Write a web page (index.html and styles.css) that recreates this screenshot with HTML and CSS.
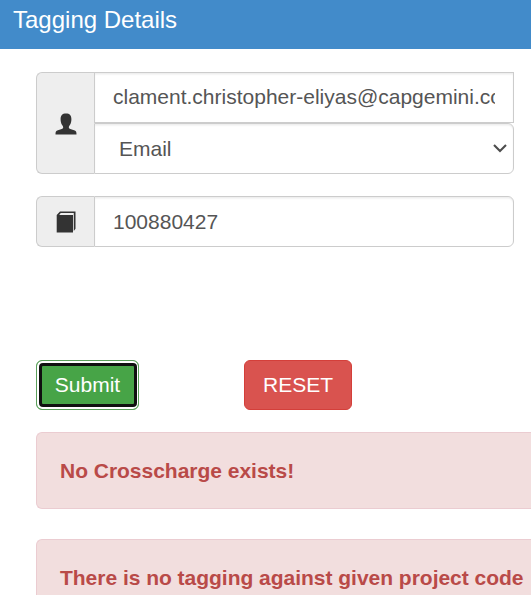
FILE: index.html
```html
<!DOCTYPE html>
<html lang="en">
<head>
<meta charset="utf-8">
<title>Tagging Details</title>
<link rel="stylesheet" href="styles.css">
</head>
<body>
<header class="panel-heading"><h1>Tagging Details</h1></header>
<main class="panel-body">
  <div class="input-group">
    <span class="addon">
      <svg class="icon-user" width="22" height="22" viewBox="0 0 22 22" fill="#333"><path d="M11 .5C7.200.5 5.600 2.500 5.600 6c0 2.200.4 4.600 1.700 6.300.5.7.9 1.200.9 1.900 0 .9-.5 1.300-1.500 1.700l-4.500 1.700C.9 18.200.5 19 .5 21.500h21c0-2.500-.4-3.300-1.700-3.900l-4.500-1.700c-1-.4-1.500-.8-1.500-1.700 0-.7.4-1.200.9-1.900 1.300-1.700 1.700-4.100 1.700-6.300C16.400 2.500 14.800.5 11 .5z"/></svg>
    </span>
    <div class="fields">
      <input class="control control-email" type="text" value="clament.christopher-eliyas@capgemini.com">
      <div class="control control-select">
        <span>Email</span>
        <svg width="14" height="9" viewBox="0 0 14 9" fill="none" stroke="#4d4d4d" stroke-width="2.100"><path d="M1 1l6 6 6-6"/></svg>
      </div>
    </div>
  </div>
  <div class="input-group">
    <span class="addon">
      <svg class="icon-book" width="20" height="22" viewBox="0 0 20 22" fill="#333"><path d="M.7 4L4 .5h15.500v17.300L17.800 20V2H4.700L3.200 4H17v17.500H.7z"/></svg>
    </span>
    <div class="fields">
      <input class="control control-code" type="text" value="100880427">
    </div>
  </div>
  <div class="actions">
    <button class="btn btn-submit" type="button">Submit</button>
    <button class="btn btn-reset" type="button">RESET</button>
  </div>
  <div class="alert">No Crosscharge exists!</div>
  <div class="alert alert-last">There is no tagging against given project code</div>
</main>
</body>
</html>
```
FILE: styles.css
```css
* { box-sizing: border-box; }
body {
  margin: 0;
  height: 595px;
  overflow: hidden;
  background: #fff;
  color: #555;
  font: 21px/30px "Liberation Sans", Arial, sans-serif;
}
.panel-heading {
  height: 49px;
  padding: 6px 13px;
  background: #428bca;
  color: #fff;
}
.panel-heading h1 {
  margin: 0;
  font-size: 24px;
  font-weight: 400;
  line-height: 28px;
}
.panel-body { padding: 23px 0 0 36px; }
.input-group {
  display: flex;
  width: 478px;
  margin-bottom: 22px;
}
.addon {
  display: flex;
  align-items: center;
  justify-content: center;
  width: 58px;
  border: 1px solid #ccc;
  border-right: 0;
  border-radius: 6px 0 0 6px;
  background: #eee;
}
.addon svg { display: block; }
.icon-user { margin-top: 1px; }
.icon-book { margin-top: 1px; }
.fields { flex: 1; min-width: 0; }
.control {
  display: block;
  width: 100%;
  height: 51px;
  margin: 0;
  padding: 0 18px;
  border: 1px solid #ccc;
  background: #fff;
  box-shadow: inset 0 1.5px 1.5px rgba(0, 0, 0, .075);
  color: #555;
  font: inherit;
  outline: 0;
}
.control-email { padding-bottom: 1px; }
.control-select {
  display: flex;
  align-items: center;
  justify-content: space-between;
  height: 51px;
  padding: 0 6px 0 24px;
  border-radius: 0 6px 6px 0;
}
.control-code { border-radius: 0 6px 6px 0; }
.actions {
  display: flex;
  gap: 105px;
  margin: 113px 0 22px;
}
.btn {
  height: 50px;
  padding: 0;
  border: 1px solid;
  border-radius: 6px;
  color: #fff;
  font: inherit;
}
.btn-submit {
  position: relative;
  width: 103px;
  border-color: #5b9f5b;
  background: #47a447;
  box-shadow: inset 0 0 0 3px #fff;
}
.btn-submit::after {
  content: "";
  position: absolute;
  inset: 2px 1px 2px 2px;
  border: 3px solid #101010;
  border-radius: 4px;
}
.btn-reset {
  width: 108px;
  border-color: #d43f3a;
  background: #d9534f;
}
.alert {
  height: 77px;
  margin-bottom: 30px;
  padding: 23px 0 0 23px;
  border: 1px solid #ebccd1;
  border-right: 0;
  border-radius: 6px 0 0 6px;
  background: #f2dede;
  color: #b94a48;
  font-weight: 700;
  letter-spacing: -.02px;
  white-space: nowrap;
}
.alert-last {
  height: 56px;
  margin-bottom: 0;
  border-bottom: 0;
  border-radius: 6px 0 0;
}
```
